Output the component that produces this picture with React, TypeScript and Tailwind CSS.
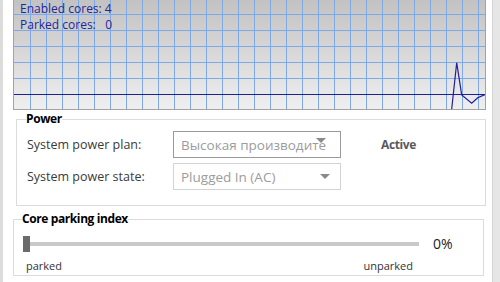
import React from 'react';

const font = { fontFamily: '"Open Sans", "Noto Sans", Arial, sans-serif' };

function LoadChart() {
  const vLines = Array.from({ length: 29 }, (_, i) => 16 + i * 16);
  const hLines = [14, 30, 46, 62, 78];
  return (
    <div className="relative ml-[10px] h-[110px] w-[473px] border-x border-b border-[#a3a3a3]">
      <svg width="471" height="109" className="block" shapeRendering="crispEdges">
        <defs>
          <linearGradient id="bg" x1="0" y1="0" x2="0" y2="1">
            <stop offset="0" stopColor="#c2c2c2" />
            <stop offset="1" stopColor="#efefef" />
          </linearGradient>
        </defs>
        <rect width="471" height="109" fill="url(#bg)" />
        {vLines.map((x) => (
          <line key={'v' + x} x1={x + 0.5} y1="0" x2={x + 0.5} y2="109" stroke="#7ea9e6" />
        ))}
        {hLines.map((y) => (
          <line key={'h' + y} x1="0" y1={y + 0.5} x2="471" y2={y + 0.5} stroke="#7ea9e6" />
        ))}
        <line x1="0" y1="94.5" x2="471" y2="94.5" stroke="#1f1f96" />
        <polyline
          points="437.7,109 442.7,62.7 447.7,95 457.7,103.3 463.7,97.7 471,94.5"
          fill="none"
          stroke="#1f1f96"
          strokeWidth="1.2"
          shapeRendering="geometricPrecision"
        />
      </svg>
      <div className="absolute left-[6px] top-[1px] text-[12px] leading-[16px] text-[#25259a]" style={font}>
        <div>Enabled cores: 4</div>
        <div className="whitespace-pre">Parked cores:   0</div>
      </div>
    </div>
  );
}

function Combo({ value, dark, high }: { value: string; dark?: boolean; high?: boolean }) {
  return (
    <div
      className={`relative flex h-[27px] w-[168px] items-center border bg-white pl-[7px] text-[13.5px] text-[#9c9c9c] ${
        dark ? 'border-[#9a9a9a]' : 'border-[#d3d3d3]'
      }`}
    >
      <span className="block w-[145px] overflow-hidden whitespace-nowrap">{value}</span>
      <span
        className={`absolute h-0 w-0 border-x-[5px] border-t-[5px] border-x-transparent border-t-[#8a8a8a] ${
          high ? 'right-[14px] top-[6px]' : 'right-[10px] top-[10px]'
        }`}
      />
    </div>
  );
}

export default function App() {
  return (
    <div className="flex h-[282px] w-[500px] overflow-hidden bg-white" style={font}>
      <div className="w-[3px] bg-[#dcdcdc]" />
      <div className="flex flex-1 flex-col">
        <LoadChart />

        <fieldset className="ml-[13px] mt-[1px] h-[95px] w-[470px] border border-[#dcdcdc] px-[10px]">
          <legend className="ml-[-1px] px-0 text-[12px] font-bold leading-[16px] tracking-[-0.4px] text-black">
            Power
          </legend>
          <div className="mt-[4px] grid grid-cols-[146px_168px_auto] items-center gap-y-[5px] text-[12.5px] leading-[18px] text-[#3a3a3a]">
            <div>System power plan:</div>
            <Combo value="Высокая производительность" dark high />
            <div className="ml-[40px] text-[12px] font-bold tracking-[-0.4px] text-[#5a5a5a]">Active</div>
            <div>System power state:</div>
            <Combo value="Plugged In (AC)" />
            <div />
          </div>
        </fieldset>

        <fieldset className="ml-[10px] mt-[5px] w-[471px] border border-[#dcdcdc] px-[9px] pb-[1px]">
          <legend className="ml-[-1px] px-0 text-[12px] font-bold leading-[16px] tracking-[-0.4px] text-black">
            Core parking index
          </legend>
          <div className="mt-[8px] flex h-[18px] items-center">
            <div className="h-[16px] w-[7px] bg-[#6b6b6b]" />
            <div className="h-[4px] w-[389px] bg-[#c9c9c9]" />
            <div className="ml-[14px] text-[14px] leading-[18px] text-[#222]">0%</div>
          </div>
          <div className="ml-[3px] mt-[5px] flex w-[387px] justify-between text-[11px] leading-[16px] text-[#333]">
            <span>parked</span>
            <span>unparked</span>
          </div>
        </fieldset>
      </div>
      <div className="w-[8px] border-l border-[#d4d4d4] bg-[#e6e6e6]" />
    </div>
  );
}
